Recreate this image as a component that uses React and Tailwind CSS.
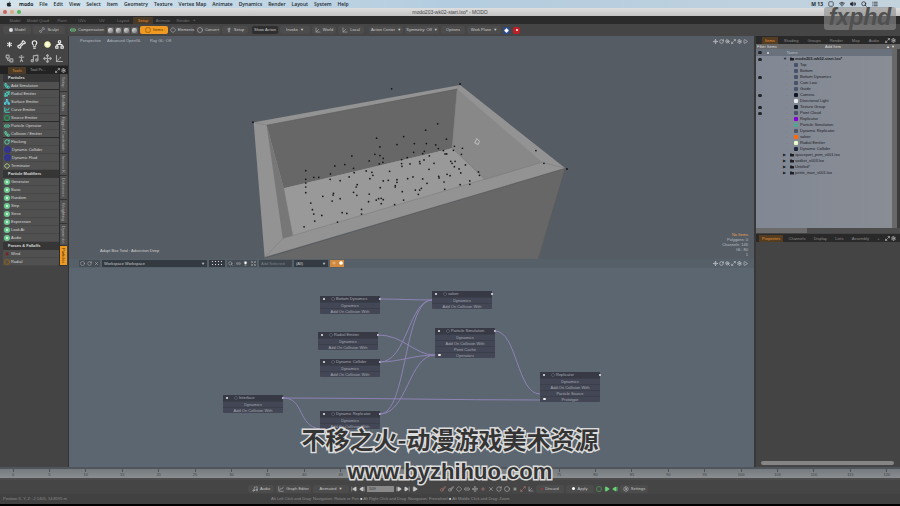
import React, { useState } from "react";
import clsx from "clsx";
import {
  Asterisk, Axis3d, Bone, ChartSpline, Circle, Diamond, Expand, Key, Lightbulb, Link2, ListIcon, Maximize2, Move,
  Music, Network, PersonStanding, Play, Plus, RotateCw, Search, Settings, SkipBack, SkipForward, Sparkles,
  SquareDashed, StepBack, StepForward, Volume2, Wifi, Workflow, X, ZoomIn,
} from "lucide-react";
import { FaApple, FaFolder } from "react-icons/fa";

const MENUS = [
  "File", "Edit", "View", "Select", "Item", "Geometry", "Texture", "Vertex Map",
  "Animate", "Dynamics", "Render", "Layout", "System", "Help",
];

const LAYOUT_TABS = [
  ["Model", "w-[20px]"], ["Model Quad", "w-[26px]"], ["Paint", "w-[22px]"], ["UVs", "w-[18px]"], ["UV", "w-[22px]"],
  ["Layout", "w-[20px]"], ["Setup", "w-[20px]"], ["Animate", "w-[20px]"], ["Render", "w-[20px]"],
];

const TOOLS = [
  { group: "Particles" },
  { name: "Add Simulation", color: "text-teal-300", icon: Workflow, end: true },
  { name: "Radial Emitter", color: "text-teal-300", icon: Sparkles },
  { name: "Surface Emitter", color: "text-cyan-300", icon: Network },
  { name: "Curve Emitter", color: "text-teal-300", icon: ChartSpline },
  { name: "Source Emitter", color: "text-green-400", icon: SquareDashed, end: true },
  { name: "Particle Operator", color: "text-emerald-300", icon: Link2 },
  { name: "Collision / Emitter", color: "text-emerald-300", icon: Workflow, end: true },
  { name: "Flocking", color: "text-emerald-300", icon: RotateCw },
  { name: "Dynamic Collider", blob: true },
  { name: "Dynamic Fluid", blob: true },
  { name: "Terminator", color: "text-lime-200", icon: Diamond },
  { group: "Particle Modifiers" },
  { name: "Generator", ring: true },
  { name: "Basic", ring: true },
  { name: "Random", ring: true },
  { name: "Step", ring: true },
  { name: "Sieve", ring: true },
  { name: "Expression", ring: true },
  { name: "Look At", ring: true },
  { name: "Audio", ring: true },
  { group: "Forces & Falloffs" },
  { name: "Wind", color: "text-red-900", icon: Asterisk },
  { name: "Radial", color: "text-yellow-700", icon: Circle },
];

const SIDE_TABS = [
  ["Setup", "h-[18px]"], ["Modifiers", "h-[24px]"], ["Rigged Constraints", "h-[38px]"], ["Inverse K", "h-[22px]"],
  ["Deformers", "h-[24px]"], ["Weighting", "h-[24px]"], ["Dynamics", "h-[22px]"], ["Particles", "h-[20px]"],
];

const SCENE = [
  { name: "Top", eye: false },
  { name: "Bottom", eye: false },
  { name: "Bottom Dynamics", eye: true },
  { name: "Cam Low", eye: false },
  { name: "Guide", eye: false },
  { name: "Camera", eye: true, color: "bg-gray-900" },
  { name: "Directional Light", eye: false, color: "bg-gray-200" },
  { name: "Texture Group", eye: true, color: "bg-gray-900" },
  { name: "Point Cloud", eye: true },
  { name: "Replicator", eye: false, color: "bg-purple-700" },
  { name: "Particle Simulation", eye: false, color: "bg-emerald-400/40" },
  { name: "Dynamic Replicator", eye: false, color: "bg-gray-600" },
  { name: "solver", eye: false, color: "bg-orange-500" },
  { name: "Radial Emitter", eye: false, color: "bg-lime-100" },
  { name: "Dynamic Collider", eye: false, color: "bg-gray-800" },
];

const FILES = ["spaceport_prim_v001.lxo", "sodket_v003.lxo", "Untitled*", "petite_man_v001.lxo"];

const BASE_ROWS = ["Dynamics", "Add On Collision With"];
const NODES = [
  { title: "Bottom Dynamics", place: "left-[251px] top-[28px]", rows: BASE_ROWS },
  { title: "Radial Emitter", place: "left-[249px] top-[64px]", rows: BASE_ROWS },
  { title: "Dynamic Collider", place: "left-[251px] top-[91px]", rows: BASE_ROWS },
  { title: "Interface", place: "left-[154px] top-[127px]", rows: BASE_ROWS },
  { title: "Dynamic Replicator", place: "left-[251px] top-[143px]", rows: BASE_ROWS },
  { title: "solver", place: "left-[363px] top-[23px]", rows: BASE_ROWS },
  { title: "Particle Simulation", place: "left-[366px] top-[60px]", rows: [...BASE_ROWS, "Point Cache", "Operators"], input: true },
  { title: "Replicator", place: "left-[471px] top-[104px]", rows: [...BASE_ROWS, "Particle Source", "Prototype"], input: true },
];

const WIRES = [
  "M311 31 C330 31 345 32 363 32",
  "M309 67 C335 67 345 87 366 87",
  "M311 94 C338 94 340 32 363 32",
  "M311 94 C330 94 345 87 366 87",
  "M311 146 C338 146 335 32 363 32",
  "M311 146 C338 146 340 87 366 87",
  "M214 130 C300 130 385 132 471 132",
  "M214 130 C236 130 228 158 251 161",
  "M426 63 C448 63 448 126 471 126",
];

const DOTS = [
  [455, 41], [410, 189], [420, 215], [471, 208], [491, 184], [557, 165], [593, 146], [523, 205], [559, 205], [587, 209],
  [619, 192], [405, 237], [420, 241], [430, 249], [429, 261], [418, 266], [336, 242], [285, 272], [315, 268], [341, 279],
  [343, 292], [388, 257], [198, 286], [198, 312], [198, 323], [198, 335], [198, 352], [222, 306], [237, 306], [272, 296],
  [271, 312], [301, 316], [328, 305], [352, 328], [349, 335], [341, 351], [351, 360], [379, 287], [396, 291], [399, 300],
  [390, 310], [388, 356], [386, 379], [421, 337], [430, 317], [445, 315], [449, 288], [485, 253], [485, 265], [486, 273],
  [502, 247], [521, 231], [510, 266], [471, 313], [471, 321], [466, 331], [466, 335], [487, 349], [503, 310], [519, 305],
  [539, 259], [540, 265], [548, 235], [553, 228], [552, 254], [568, 242], [567, 282], [582, 264], [548, 311], [561, 324],
  [595, 220], [610, 226], [615, 236], [620, 236], [643, 213], [640, 225], [667, 219], [664, 237], [632, 258], [636, 264],
  [643, 274], [645, 258], [676, 269], [657, 281], [662, 293], [621, 297], [630, 301], [596, 303], [597, 308], [612, 320],
  [614, 342], [660, 328], [689, 317], [689, 327], [715, 290], [718, 300], [526, 344], [539, 344], [544, 339], [535, 357],
  [491, 374], [464, 388], [424, 369], [430, 373], [424, 385], [409, 374], [416, 370], [365, 402], [365, 416], [307, 412],
  [321, 414], [281, 354], [280, 359], [277, 377], [301, 370], [249, 363], [213, 383], [218, 403], [222, 416], [225, 437],
  [246, 420], [193, 454], [293, 440], [887, 226], [911, 264],
];

const TICKS = Array.from({ length: 25 }, (_, i) => i * 5);

function MenuBar() {
  return (
    <nav className="flex h-[8px] items-center bg-linear-to-r from-[#d4e4ec] via-[#b3ccdf] to-[#c3d3de] pl-[6px] pr-[22px] font-['Open_Sans',sans-serif] text-[5px] leading-[8px] font-semibold text-[#20272d]">
      <FaApple className="mr-[7px] size-[6px]" />
      <button className="mr-[6px] font-bold">modo</button>
      <div className="flex gap-[6px]">
        {MENUS.map((menu) => (
          <button key={menu}>{menu}</button>
        ))}
      </div>
      <div className="ml-auto flex items-center gap-[5px]">
        <span className="font-bold">M 13</span>
        <SquareDashed className="size-[6px]" strokeWidth={3} />
        <Wifi className="size-[6px]" strokeWidth={3} />
        <Volume2 className="size-[6px] fill-current" strokeWidth={3} />
        <Search className="size-[6px]" strokeWidth={3} />
      </div>
      <ListIcon className="ml-[5px] size-[6px]" strokeWidth={3} />
    </nav>
  );
}

function TitleBar() {
  return (
    <header className="relative flex h-[8px] items-center justify-center bg-linear-to-b from-[#dedede] to-[#c2c2c2] text-[5px] leading-[8px] text-[#444]">
      <div className="absolute left-[3px] flex gap-[3px]">
        <button aria-label="Close" className="size-[4px] rounded-full bg-[#c9605c]" />
        <button aria-label="Minimize" className="size-[4px] rounded-full bg-[#d8aa84]" />
        <button aria-label="Zoom" className="size-[4px] rounded-full bg-[#50b85c]" />
      </div>
      <h1>modo203-wk02-start.lxo* - MODO</h1>
    </header>
  );
}

function LayoutTabs() {
  const [active, setActive] = useState("Setup");
  return (
    <div className="flex h-[8px] items-center bg-[#2b2b2b] pl-[5px]">
      {LAYOUT_TABS.map(([tab, width]) => (
        <button
          key={tab}
          onClick={() => setActive(tab)}
          className={clsx(width, "h-[7px] leading-[7px]", active === tab ? "bg-[#4a3b28] text-[#e08a2c]" : "text-[#747474]")}
        >
          {tab}
        </button>
      ))}
      <button aria-label="Add layout" className="text-[#999]">+</button>
    </div>
  );
}

function ToolButton({ children, icon: Icon, className, menu }) {
  return (
    <button className={clsx("flex h-[8px] items-center justify-center gap-[2px] rounded-[2px] leading-[8px] whitespace-nowrap", className)}>
      {Icon && <Icon className="size-[6px] shrink-0" />}
      {children}
      {menu && <span>▼</span>}
    </button>
  );
}

function Toolbar() {
  return (
    <div className="flex h-[12px] items-center gap-[2px] bg-[#454545] pl-[3px] text-[#c8c8c8]">
      <ToolButton className="w-[28px] bg-[#4c4c4c]">
        <span className="size-[4px] rounded-full bg-[#ddd]" />
        Model
      </ToolButton>
      <ToolButton className="w-[32px] bg-[#4c4c4c]" icon={Bone}>Sculpt</ToolButton>
      <ToolButton className="ml-[2px] w-[36px] bg-[#4c4c4c]">
        <Link2 className="size-[6px] shrink-0 text-[#76e08b]" strokeWidth={3} />
        Compensation
      </ToolButton>
      <div className="flex gap-[1px]">
        {["Vertices", "Edges", "Polygons", "Materials"].map((mode) => (
          <button key={mode} aria-label={mode} className="flex size-[7px] items-center justify-center rounded-[1px] bg-[#5b5b5b]">
            <span className="size-[5px] rounded-[2px] bg-linear-to-br from-[#e5e5e5] to-[#777]" />
          </button>
        ))}
      </div>
      <ToolButton className="w-[28px] bg-[#f09a22] text-[#4f300a]" icon={SquareDashed}>Items</ToolButton>
      <ToolButton className="w-[24px] bg-[#4c4c4c]" icon={Diamond}>Elements</ToolButton>
      <ToolButton className="w-[24px] bg-[#4c4c4c]" icon={Circle}>Convert</ToolButton>
      <ToolButton className="w-[26px] bg-[#4c4c4c]" icon={PersonStanding}>Setup</ToolButton>
      <ToolButton className="ml-[2px] w-[26px] bg-[#2f2f2f]">Show Action</ToolButton>
      <ToolButton className="w-[30px] bg-[#4c4c4c]" menu>Invoke</ToolButton>
      <ToolButton className="w-[24px] bg-[#4c4c4c]" icon={Axis3d}>World</ToolButton>
      <ToolButton className="w-[26px] bg-[#4c4c4c]" icon={Axis3d}>Local</ToolButton>
      <ToolButton className="ml-[3px] w-[34px] bg-[#4c4c4c]" menu>Action Center</ToolButton>
      <ToolButton className="w-[34px] bg-[#4c4c4c]" menu>Symmetry: Off</ToolButton>
      <ToolButton className="w-[24px] bg-[#4c4c4c]">Options</ToolButton>
      <ToolButton className="w-[34px] bg-[#4c4c4c]" menu>Work Plane</ToolButton>
      <button aria-label="Render preview" className="flex size-[7px] items-center justify-center bg-[#2d4b82]">
        <Diamond className="size-[5px] fill-white text-white" />
      </button>
      <button aria-label="Stop" className="ml-[1px] flex size-[7px] items-center justify-center rounded-[2px] bg-[#c01f25]">
        <span className="size-[2px] rounded-full bg-white" />
      </button>
    </div>
  );
}

function ToolIcon({ tool }) {
  if (tool.ring) return <span className="size-[6px] shrink-0 rounded-full border-2 border-[#6ecb91] bg-[#e4f5e9]" />;
  if (tool.blob) return <span className="size-[7px] shrink-0 rounded-full bg-[#33358a]" />;
  const Icon = tool.icon;
  return <Icon className={clsx("size-[6px] shrink-0", tool.color)} strokeWidth={3} />;
}

function LeftPanel() {
  const [active, setActive] = useState("Particles");
  const snaps = [Asterisk, Bone, Lightbulb, Circle, Network, Workflow, PersonStanding, Music, Move, Axis3d];
  return (
    <aside className="w-[69px] shrink-0 border-r border-[#333] bg-[#444]">
      <div className="grid h-[30px] grid-cols-5 place-items-center border-b border-[#333] pl-[3px] pr-[2px] pt-[1px]">
        {snaps.map((Icon, i) => (
          <button key={i} aria-label={`Tool ${i + 1}`}>
            <Icon
              className={clsx(
                i === 3 ? "size-[7px] fill-[#ffffe0] text-[#dfe08a]" : "size-[9px]",
                i !== 3 && (i < 5 ? "text-[#eee]" : "text-[#aaa]")
              )}
              strokeWidth={3}
            />
          </button>
        ))}
      </div>
      <div className="flex h-[8px] items-center bg-[#222] pl-[8px] pr-[2px]">
        <button className="w-[18px] bg-[#4a3b28] leading-[7px] text-[#d98c3a]">Tools</button>
        <button className="ml-[4px] text-[#999]">Tool Pr...</button>
        <div className="ml-auto flex gap-[1px] text-[#ccc]">
          <Maximize2 className="size-[5px]" strokeWidth={3} />
          <Settings className="size-[5px]" strokeWidth={3} />
        </div>
      </div>
      <div className="flex">
        <ul className="flex-1 border-r border-[#2c2c2c] pl-[3px]">
          {TOOLS.map((tool) =>
            tool.group ? (
              <li key={tool.group} className="h-[8px] bg-[#363636] pl-[5px] leading-[8px] font-semibold text-[#ddd]">{tool.group}</li>
            ) : (
              <li key={tool.name} className={clsx("h-[8px] border-b bg-[#505050]", tool.end ? "border-[#2a2a2a]" : "border-[#484848]")}>
                <button className="flex h-[7px] w-full items-center gap-[1px] pl-[1px] leading-[7px] whitespace-nowrap text-[#d6d6d6]">
                  <ToolIcon tool={tool} />
                  {tool.name}
                </button>
              </li>
            )
          )}
        </ul>
        <div className="mr-[1px] flex w-[7px] flex-col">
          {SIDE_TABS.map(([tab, height]) => (
            <button
              key={tab}
              onClick={() => setActive(tab)}
              className={clsx(
                height,
                "flex w-[7px] items-center justify-center overflow-hidden border-b border-[#333] leading-[7px] whitespace-nowrap [writing-mode:vertical-rl]",
                active === tab ? "bg-[#f09a22] text-[#4f300a]" : "bg-[#515151] text-[#aaa]"
              )}
            >
              {tab}
            </button>
          ))}
        </div>
      </div>
    </aside>
  );
}

function ViewControls() {
  const icons = [Move, RotateCw, ZoomIn, Maximize2, Settings, Play];
  return (
    <div className="flex gap-[1px] text-[#c5c9cc]">
      {icons.map((Icon, i) => (
        <Icon key={i} className="size-[5px]" strokeWidth={3} />
      ))}
    </div>
  );
}

function Viewport() {
  return (
    <section className="relative min-h-0 flex-[222] overflow-hidden bg-[#555c64]">
      <svg className="absolute inset-0 size-full" viewBox="69 36 685 222" preserveAspectRatio="xMidYMid slice">
        <polygon points="265,258 565,168 538,260 265,260" fill="#676767" />
        <polygon points="254,122 460,85 565,168 265,257" fill="#939393" />
        <polygon points="267,125 457,89 452,148 284,188" fill="#676767" />
        <polygon points="457,89 542,162 484,180 452,148" fill="#888" />
        <polygon points="284,188 452,148 484,179 293,235" fill="#999" />
        <polygon points="267,125 284,188 293,235 283,238" fill="#777" />
        <path d="M457 89 452 148 484 178M284 188 293 235M265 257 283 238 542 162 565 168M254 122 267 125M460 85 457 89" fill="none" stroke="#7b7b7b" strokeWidth=".5" />
        <path d="M265 257 565 168 538 258M267 125 457 89" fill="none" stroke="#555" strokeWidth=".5" />
        <g transform="translate(240 75) scale(.3333)" fill="#171717">
          {DOTS.map(([x, y], i) => (
            <circle key={i} cx={x} cy={y} r="2.6" />
          ))}
          <circle cx="40" cy="141" r="3" />
          <circle cx="660" cy="27" r="3" />
          <circle cx="980" cy="281" r="3" />
          <path d="M704 203 710 190 718 198 714 208Z" fill="none" stroke="#ddd" strokeWidth="2" />
        </g>
      </svg>
      <div className="relative flex h-full flex-col justify-between pb-[2px] pl-[11px] pr-[6px] pt-[2px] text-[#b9bec2]">
        <div className="flex items-center leading-[6px]">
          <button className="w-[27px] text-left">Perspective</button>
          <button className="w-[43px] text-left">Advanced OpenGL</button>
          <button>Ray GL: Off</button>
          <div className="ml-auto"><ViewControls /></div>
        </div>
        <div className="flex items-end justify-between leading-[5px]">
          <p className="mb-[4px] ml-[20px] text-[#d0d0d0]">Adapt Box Total : Advection Deep</p>
          <div className="text-right">
            <p className="text-[#e0a25a]">No Items</p>
            <p>Polygons: 0</p>
            <p>Channels: 146</p>
            <p>GL: 80</p>
            <p>1</p>
          </div>
        </div>
      </div>
    </section>
  );
}

function GraphNode({ node }) {
  return (
    <div className={clsx("absolute w-[60px] rounded-[1px] bg-[#434654] text-[#a7aab3]", node.place)}>
      <div className="relative flex h-[6px] items-center bg-[#373945] pl-[3px] leading-[6px]">
        <span className="size-[2px] rounded-full bg-[#eee]" />
        <Diamond className="ml-[6px] mr-[1px] size-[4px] shrink-0" />
        <span className="whitespace-nowrap">{node.title}</span>
        <span className="absolute -right-[1px] size-[2px] rounded-full bg-[#e8e0f4]" />
      </div>
      {node.rows.map((row, i) => (
        <div key={row} className="relative h-[6px] border-t border-[#3b3e4b] text-center leading-[5px]">
          {node.input && i === node.rows.length - 1 && (
            <span className="absolute left-[3px] top-[1px] h-[2px] w-[3px] rounded-full bg-[#eee]" />
          )}
          {row}
        </div>
      ))}
    </div>
  );
}

function Schematic() {
  return (
    <section className="flex min-h-0 flex-[208] flex-col bg-[#5b6670]">
      <div className="flex h-[9px] shrink-0 items-center gap-[2px] bg-[#566069] pl-[10px] pr-[6px] text-[#c4c8cc]">
        <div className="flex w-[21px] justify-around rounded-[1px] bg-[#454c53] py-[1px]">
          <button aria-label="Lock"><Circle className="size-[5px]" /></button>
          <button aria-label="Refresh"><RotateCw className="size-[5px]" /></button>
          <button aria-label="Clear"><X className="size-[5px]" /></button>
        </div>
        <div className="relative">
          <select aria-label="Workspace" className="block h-[7px] w-[105px] appearance-none bg-[#343a41] pl-[2px] leading-[7px]">
            <option>Workspace Workspace</option>
          </select>
          <span className="pointer-events-none absolute right-[2px] top-0 leading-[7px]">▼</span>
        </div>
        <button aria-label="Node layout" className="grid h-[7px] w-[16px] grid-cols-4 place-items-center bg-[#343a41] px-[2px] py-[1px]">
          {TICKS.slice(0, 8).map((n) => (
            <span key={n} className="size-[1px] bg-[#e0d0e0]" />
          ))}
        </button>
        <div className="flex w-[30px] justify-around bg-[#454c53] py-[1px]">
          <button aria-label="Search"><Search className="size-[5px]" /></button>
          <button aria-label="Link"><Link2 className="size-[5px]" /></button>
          <button aria-label="Light"><Lightbulb className="size-[5px] fill-white" /></button>
          <button aria-label="Fit"><Expand className="size-[5px]" /></button>
        </div>
        <input aria-label="Add selected" placeholder="Add Selected" className="h-[7px] w-[33px] bg-[#3d444b] px-[2px] leading-[7px] placeholder:text-[#7b838a]" />
        <div className="relative">
          <select aria-label="Filter" className="block h-[7px] w-[34px] appearance-none bg-[#343a41] pl-[2px] leading-[7px]">
            <option>(All)</option>
          </select>
          <span className="pointer-events-none absolute right-[2px] top-0 leading-[7px]">▼</span>
        </div>
        <div className="flex text-white">
          <button aria-label="Show inputs" className="flex size-[7px] items-center justify-center bg-[#d18a3c]"><Plus className="size-[4px]" /></button>
          <button aria-label="Show outputs" className="flex size-[7px] items-center justify-center bg-[#d18a3c]"><Circle className="size-[4px] fill-white" /></button>
        </div>
        <div className="ml-auto"><ViewControls /></div>
      </div>
      <div className="relative flex-1 overflow-hidden">
        {NODES.map((node) => (
          <GraphNode key={node.title} node={node} />
        ))}
        <svg className="absolute left-0 top-0" width="685" height="198" fill="none" stroke="#8f83b5" strokeWidth="1">
          {WIRES.map((d) => (
            <path key={d} d={d} />
          ))}
        </svg>
      </div>
    </section>
  );
}

function PanelTabs({ tabs, className }) {
  const [active, setActive] = useState(tabs[0]);
  return (
    <div className={clsx("flex h-[8px] items-center justify-between bg-[#292929] pr-[4px]", className)}>
      {tabs.map((tab) => (
        <button
          key={tab}
          onClick={() => setActive(tab)}
          className={clsx("px-[3px] leading-[7px]", active === tab ? "bg-[#553d22] text-[#e0923c]" : "text-[#8b8b8b]")}
        >
          {tab}
        </button>
      ))}
      <div className="flex gap-[1px] text-[#ccc]">
        <Maximize2 className="size-[5px]" strokeWidth={3} />
        <Settings className="size-[5px]" strokeWidth={3} />
      </div>
    </div>
  );
}

function TreeRow({ eye, children }) {
  return (
    <li className="flex h-[6px] items-center leading-[6px]">
      <span className="flex w-[25px] justify-start pl-[2px]">{eye && <span className="h-[3px] w-[4px] rounded-full bg-[#20242a]" />}</span>
      {children}
    </li>
  );
}

function RightPanel() {
  return (
    <aside className="flex w-[146px] shrink-0 flex-col border-l-2 border-[#383838] bg-[#444]">
      <PanelTabs tabs={["Items", "Shading", "Groups", "Render", "Map", "Audio"]} className="pl-[6px]" />
      <div className="flex h-[5px] items-center bg-[#666] pl-[1px] leading-[5px] text-[#ddd]">
        <button className="w-[68px] text-left">Filter Items</button>
        <button className="flex-1 text-left">Add Item</button>
        <span className="w-[14px]">▲ ▼</span>
      </div>
      <div className="flex h-[179px]">
        <div className="flex-1 text-[#1c2026]">
          <div className="flex h-[7px] items-center bg-[#69727c] leading-[7px] text-[#b4bbc2]">
            <span className="ml-[2px] h-[3px] w-[4px] rounded-full bg-[#20242a]" />
            <span className="ml-[5px] size-[2px] rounded-full bg-[#ddd]" />
            <span className="ml-[18px]">Name</span>
          </div>
          <ul className="h-[172px] bg-linear-to-r from-[#818894] to-[#898d94]">
            <TreeRow eye>
              <span className="w-[9px] pl-[2px]">▼</span>
              <FaFolder className="mr-[1px] size-[4px]" />
              <span className="font-bold whitespace-nowrap">modo203-wk02-start.lxo*</span>
            </TreeRow>
            {SCENE.map((item) => (
              <TreeRow key={item.name} eye={item.eye}>
                <span className="w-[13px] pl-[5px] text-[#5e656e]">-</span>
                <span className={clsx("mr-[2px] size-[4px] rounded-[1px]", item.color || "bg-[#46536b]")} />
                <span className="whitespace-nowrap">{item.name}</span>
              </TreeRow>
            ))}
            {FILES.map((file) => (
              <TreeRow key={file}>
                <span className="w-[9px] pl-[2px]">▶</span>
                <FaFolder className="mr-[1px] size-[4px]" />
                <span>{file}</span>
              </TreeRow>
            ))}
          </ul>
        </div>
        <div className="w-[5px] bg-[#686868]" />
        <div className="w-[3px] bg-[#3c3c3c]" />
      </div>
      <div className="mb-[1px] h-[5px] bg-[#4c4c4c]">
        <div className="h-full w-[51px] bg-[#6b6b6b]" />
      </div>
      <PanelTabs tabs={["Properties", "Channels", "Display", "Lists", "Assembly", "+"]} className="pl-[3px]" />
      <div className="flex-1" />
      <div className="mb-[2px] ml-[5px] mr-[6px] h-[4px] rounded-full bg-[#858585]" />
    </aside>
  );
}

function Timeline() {
  return (
    <div className="flex h-[13px] items-start justify-between border-t-2 border-b-2 border-t-[#4f555a] border-b-[#4c4c4c] bg-linear-to-b from-[#747a7f] to-[#8b8e90] px-[5px] text-[#3d4145]">
      {TICKS.map((tick) => (
        <div key={tick} className="flex w-[16px] flex-col items-center">
          <span className="h-[3px] w-px bg-[#4c5258]" />
          <span className="leading-[5px]">{tick}</span>
        </div>
      ))}
    </div>
  );
}

function Transport() {
  const keys = [Key, Key, Diamond, Link2, Move, Plus, X, RotateCw, Circle, Asterisk, Maximize2, Axis3d];
  return (
    <div className="flex h-[14px] items-end bg-[#454545] pb-[1px] pl-[248px] text-[#c6c6c6]">
      <div className="flex h-[9px] items-center gap-[2px]">
        <ToolButton className="w-[26px] bg-[#4c4c4c]" icon={Music}>Audio</ToolButton>
        <ToolButton className="w-[35px] bg-[#4c4c4c]" icon={ChartSpline}>Graph Editor</ToolButton>
        <ToolButton className="w-[36px] bg-[#4c4c4c]" menu>Animated</ToolButton>
        <button aria-label="First frame"><SkipBack className="size-[6px] fill-current" /></button>
        <button aria-label="Previous frame"><StepBack className="size-[6px] fill-current" /></button>
        <input aria-label="Current frame" defaultValue="109" className="h-[6px] w-[27px] bg-[#898989] px-[2px] leading-[6px] text-[#333]" />
        <button aria-label="Next frame"><StepForward className="size-[6px] fill-current" /></button>
        <button aria-label="Last frame"><SkipForward className="size-[6px] fill-current" /></button>
        <button aria-label="Play" className="mr-[20px]"><Play className="size-[6px] fill-current" /></button>
        {keys.map((Icon, i) => (
          <button key={i} aria-label={`Key tool ${i + 1}`} className={i % 5 === 0 ? "text-[#d07f7f]" : ""}>
            <Icon className="size-[6px]" />
          </button>
        ))}
        <ToolButton className="w-[28px] bg-[#4c4c4c]"><span className="size-[2px] rounded-full bg-[#a33]" />Discard</ToolButton>
        <ToolButton className="w-[28px] bg-[#4c4c4c]"><span className="size-[3px] rounded-full bg-white" />Apply</ToolButton>
        <div className="flex gap-[2px] text-[#69d476]">
          <button aria-label="Simulate"><SquareDashed className="size-[6px]" /></button>
          <button aria-label="Run"><Play className="size-[6px] fill-current" /></button>
          <button aria-label="Rewind"><StepBack className="size-[6px] fill-current" /></button>
        </div>
        <ToolButton className="w-[28px] bg-[#4c4c4c]" icon={Settings}>Settings</ToolButton>
      </div>
    </div>
  );
}

function StatusBar() {
  return (
    <footer className="flex h-[12px] items-center border-b-2 border-black bg-[#414141] pb-[1px] pl-[3px] whitespace-nowrap text-[#8d8d8d]">
      <span className="w-[268px]">Position X, Y, Z: -2.1405, 14.8195 m</span>
      <span>
        Alt Left Click and Drag: Navigation: Rotate or Pan <b className="text-white">●</b> Alt Right Click and Drag: Navigation:
        Freewheel <b className="text-white">●</b> Alt Middle Click and Drag: Zoom
      </span>
    </footer>
  );
}

export default function App() {
  return (
    <div className="relative flex h-screen flex-col overflow-hidden bg-[#444] font-['Liberation_Sans',sans-serif] text-[4px] leading-[6px]">
      <MenuBar />
      <TitleBar />
      <LayoutTabs />
      <Toolbar />
      <main className="flex min-h-0 flex-1">
        <LeftPanel />
        <div className="flex min-w-0 flex-1 flex-col">
          <Viewport />
          <Schematic />
        </div>
        <RightPanel />
      </main>
      <Timeline />
      <Transport />
      <StatusBar />
      <div className="absolute right-[4px] top-[7px] h-[23px] w-[72px] rounded-[3px] bg-[#909090]/60 text-center text-[23px] leading-[21px] font-bold text-[#505050] italic">
        fxphd
      </div>
      <div className="pointer-events-none absolute inset-x-0 bottom-[18px] text-center leading-[33px] font-bold text-[#353535] [-webkit-text-stroke:3px_#dcdcdc] [paint-order:stroke_fill]">
        <p className="font-['Noto_Sans_CJK_SC',sans-serif] text-[24px]">不移之火-动漫游戏美术资源</p>
        <p className="text-[22px]">www.byzhihuo.com</p>
      </div>
    </div>
  );
}
